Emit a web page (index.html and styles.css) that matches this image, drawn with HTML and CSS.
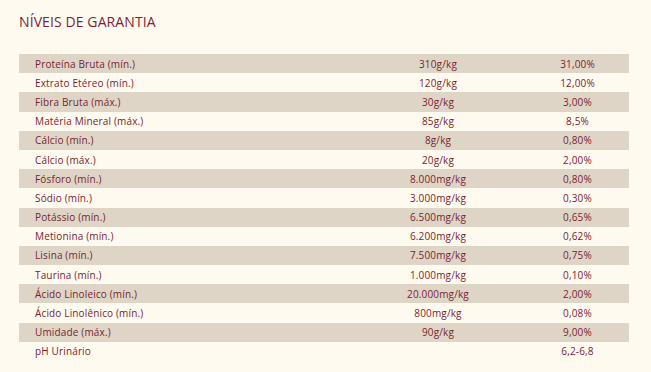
FILE: index.html
```html
<!DOCTYPE html>
<html lang="pt-BR">
<head>
<meta charset="utf-8">
<link rel="stylesheet" href="styles.css">
</head>
<body>
<div class="page">
  <h2 class="title">NÍVEIS DE GARANTIA</h2>
  <table class="levels">
    <tbody>
      <tr><td>Proteína Bruta (mín.)</td><td>310g/kg</td><td>31,00%</td></tr>
      <tr><td>Extrato Etéreo (mín.)</td><td>120g/kg</td><td>12,00%</td></tr>
      <tr><td>Fibra Bruta (máx.)</td><td>30g/kg</td><td>3,00%</td></tr>
      <tr><td>Matéria Mineral (máx.)</td><td>85g/kg</td><td>8,5%</td></tr>
      <tr><td>Cálcio (mín.)</td><td>8g/kg</td><td>0,80%</td></tr>
      <tr><td>Cálcio (máx.)</td><td>20g/kg</td><td>2,00%</td></tr>
      <tr><td>Fósforo (mín.)</td><td>8.000mg/kg</td><td>0,80%</td></tr>
      <tr><td>Sódio (mín.)</td><td>3.000mg/kg</td><td>0,30%</td></tr>
      <tr><td>Potássio (mín.)</td><td>6.500mg/kg</td><td>0,65%</td></tr>
      <tr><td>Metionina (mín.)</td><td>6.200mg/kg</td><td>0,62%</td></tr>
      <tr><td>Lisina (mín.)</td><td>7.500mg/kg</td><td>0,75%</td></tr>
      <tr><td>Taurina (mín.)</td><td>1.000mg/kg</td><td>0,10%</td></tr>
      <tr><td>Ácido Linoleico (mín.)</td><td>20.000mg/kg</td><td>2,00%</td></tr>
      <tr><td>Ácido Linolênico (mín.)</td><td>800mg/kg</td><td>0,08%</td></tr>
      <tr><td>Umidade (máx.)</td><td>90g/kg</td><td>9,00%</td></tr>
      <tr><td>pH Urinário</td><td></td><td>6,2-6,8</td></tr>
    </tbody>
  </table>
</div>
</body>
</html>
```

FILE: styles.css
```css
html, body {
  margin: 0;
  padding: 0;
  background: #fefaef;
}
body {
  font-family: "Open Sans", "Liberation Sans", sans-serif;
  color: #7a1d30;
}
.page {
  padding: 12px 22px 0 19px;
}
.title {
  margin: 0 0 22px;
  font-size: 14px;
  font-weight: 400;
  line-height: 20px;
  letter-spacing: 0.1px;
  color: #7d1e35;
}
.levels {
  width: 610px;
  border-collapse: collapse;
  font-size: 10px;
  letter-spacing: 0.15px;
}
.levels td {
  height: 19.2px;
  padding: 0;
  line-height: 14px;
  vertical-align: middle;
}
.levels td:nth-child(1) {
  width: 315px;
  padding-left: 16px;
  text-align: left;
}
.levels td:nth-child(2) {
  width: 176px;
  text-align: center;
}
.levels td:nth-child(3) {
  width: 103px;
  text-align: center;
}
.levels tr:nth-child(odd) {
  background: #ded5c6;
}
```
